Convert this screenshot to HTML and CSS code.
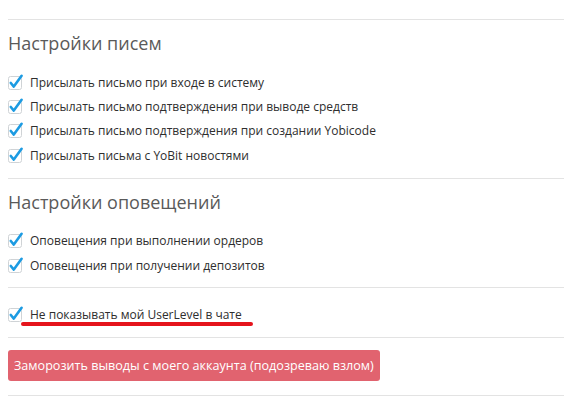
FILE: index.html
```html
<!DOCTYPE html>
<html lang="ru">
<head>
<meta charset="utf-8">
<link rel="stylesheet" href="styles.css">
</head>
<body>
<div class="page">
  <div class="sep"></div>
  <section class="group">
    <h3 class="title">Настройки писем</h3>
    <ul class="opts">
      <li class="opt"><svg class="cb" viewBox="0 0 16 16"><rect x="0.5" y="1.5" width="13" height="13" rx="2"/><path d="M2.8 8 L5.8 11.6 L13.6 0.8"/></svg><span>Присылать письмо при входе в систему</span></li>
      <li class="opt"><svg class="cb" viewBox="0 0 16 16"><rect x="0.5" y="1.5" width="13" height="13" rx="2"/><path d="M2.8 8 L5.8 11.6 L13.6 0.8"/></svg><span>Присылать письмо подтверждения при выводе средств</span></li>
      <li class="opt"><svg class="cb" viewBox="0 0 16 16"><rect x="0.5" y="1.5" width="13" height="13" rx="2"/><path d="M2.8 8 L5.8 11.6 L13.6 0.8"/></svg><span>Присылать письмо подтверждения при создании Yobicode</span></li>
      <li class="opt"><svg class="cb" viewBox="0 0 16 16"><rect x="0.5" y="1.5" width="13" height="13" rx="2"/><path d="M2.8 8 L5.8 11.6 L13.6 0.8"/></svg><span>Присылать письма с YoBit новостями</span></li>
    </ul>
  </section>
  <div class="sep"></div>
  <section class="group">
    <h3 class="title">Настройки оповещений</h3>
    <ul class="opts">
      <li class="opt"><svg class="cb" viewBox="0 0 16 16"><rect x="0.5" y="1.5" width="13" height="13" rx="2"/><path d="M2.8 8 L5.8 11.6 L13.6 0.8"/></svg><span>Оповещения при выполнении ордеров</span></li>
      <li class="opt"><svg class="cb" viewBox="0 0 16 16"><rect x="0.5" y="1.5" width="13" height="13" rx="2"/><path d="M2.8 8 L5.8 11.6 L13.6 0.8"/></svg><span>Оповещения при получении депозитов</span></li>
    </ul>
  </section>
  <div class="sep"></div>
  <div class="single">
    <div class="opt marked"><svg class="cb" viewBox="0 0 16 16"><rect x="0.5" y="1.5" width="13" height="13" rx="2"/><path d="M2.8 8 L5.8 11.6 L13.6 0.8"/></svg><span>Не показывать мой UserLevel в чате</span><i class="underline"></i></div>
  </div>
  <div class="sep"></div>
  <div class="action">
    <button class="freeze">Заморозить выводы с моего аккаунта (подозреваю взлом)</button>
  </div>
  <div class="sep"></div>
</div>
</body>
</html>
```

FILE: styles.css
```css
html, body {
  margin: 0;
  padding: 0;
  background: #fff;
}
body {
  font-family: "Open Sans", "Liberation Sans", sans-serif;
  color: #2e2e2e;
  width: 564px;
  height: 403px;
  overflow: hidden;
}
.page {
  padding: 19px 0 0 8px;
}
.sep {
  height: 1px;
  background: #e3e3e3;
}
.group {
  padding: 10px 0 9.5px;
}
.title {
  margin: 0 0 14.5px;
  font-size: 18px;
  line-height: 26px;
  font-weight: 400;
  color: #5a5a5a;
}
.opts {
  list-style: none;
  margin: 0;
  padding: 0;
}
.opt {
  display: flex;
  align-items: center;
  gap: 6px;
  height: 24.4px;
  font-size: 12px;
  line-height: 18px;
}
.cb {
  width: 16px;
  height: 16px;
  flex: none;
  overflow: visible;
}
.cb rect {
  fill: #fff;
  stroke: #cfd3d6;
  stroke-width: 1;
}
.cb path {
  fill: none;
  stroke: #1c9be2;
  stroke-width: 2.6;
  stroke-linecap: round;
  stroke-linejoin: round;
}
.single {
  padding: 14px 0 10px;
}
.marked {
  position: relative;
}
.underline {
  position: absolute;
  left: 13px;
  top: 20px;
  width: 232px;
  height: 4px;
  border-radius: 2px;
  background: #e5141c;
}
.action {
  padding: 12.5px 0 13.5px;
}
.freeze {
  display: block;
  height: 31px;
  padding: 0 6px;
  border: 0;
  border-radius: 3px;
  background: #e1636f;
  color: #fff;
  font-family: "Open Sans", "Liberation Sans", sans-serif;
  font-size: 12.6px;
  line-height: 31px;
}
```
